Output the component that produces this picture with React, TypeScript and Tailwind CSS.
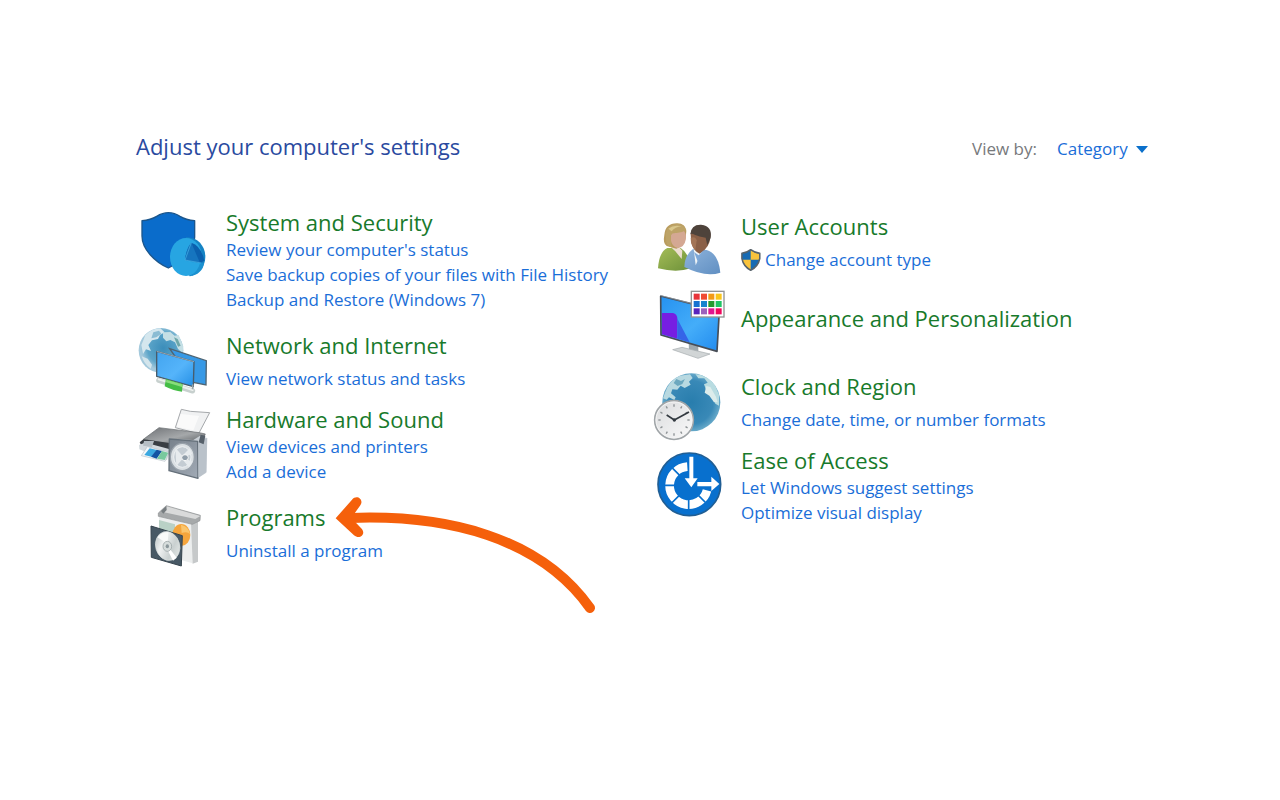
import type { ReactNode } from 'react'

type Category = {
  title: string
  links: string[]
  icon: ReactNode
  spacing: string
  shielded?: boolean
  marked?: boolean
}

function IconFrame({ viewBox, children }: { viewBox: string; children: ReactNode }) {
  return (
    <svg viewBox={viewBox} className="h-[72px] w-20 overflow-visible" aria-hidden="true">
      {children}
    </svg>
  )
}

function SecurityIcon() {
  return (
    <IconFrame viewBox="18 24 240 216">
      <path d="M36 62Q62 60 80 49Q98 38 115 38Q134 38 150 49Q168 60 194 62V112C192 150 158 184 115 204C75 186 36 148 36 108Z" fill="#0a6ccb" stroke="#1c568c" strokeWidth="4" strokeLinejoin="round" />
      <path d="M168 112C202 110 226 138 226 170C226 204 202 224 178 229Z" fill="#1583c4" />
      <ellipse cx="168" cy="171" rx="48" ry="57" fill="#27a5e2" />
      <path d="M168 184L222 190C220 212 202 226 180 229C196 220 206 206 210 190Z" fill="#1b91d0" />
      <path d="M184 128Q214 138 223 182L210 189L165 180Q168 148 184 128Z" fill="#0b60ae" />
      <path d="M184 128L210 189L165 180Q168 148 184 128Z" fill="#1675bf" />
      <path d="M165 180L184 128M165 180L213 189" fill="none" stroke="#48b7e8" strokeWidth="2" />
    </IconFrame>
  )
}

function NetworkIcon() {
  return (
    <IconFrame viewBox="18 18 240 216">
      <defs>
        <radialGradient id="net-globe" cx="55%" cy="45%">
          <stop offset="0" stopColor="#3b8dba" />
          <stop offset="0.7" stopColor="#5ca5c9" />
          <stop offset="1" stopColor="#a4c9dc" />
        </radialGradient>
        <linearGradient id="net-screen" x1="0" y1="0" x2="1" y2="1">
          <stop offset="0" stopColor="#42a4ef" />
          <stop offset="0.55" stopColor="#55b4fa" />
          <stop offset="1" stopColor="#238ee5" />
        </linearGradient>
      </defs>
      <circle cx="93" cy="94" r="67" fill="url(#net-globe)" />
      <path d="M46 48Q66 28 91 28L104 40L90 48L84 60L66 64L55 78L63 96L48 91L39 105L34 78Z" fill="#d5e7ee" />
      <path d="M70 40L87 35L94 44L79 55L64 58Z" fill="#8bbcd3" />
      <path d="M99 40L121 39L134 50L146 48L160 82L158 102L144 90L135 70L121 63L109 67L99 56Z" fill="#c5dfe5" />
      <path d="M132 55L143 60L152 80L144 83Z" fill="#6da7a9" />
      <path d="M35 112L53 119L66 137L62 149Q43 137 35 112Z" fill="#d3e5ec" />
      <path d="M119 89L229 125L228 198L190 190Z" fill="#3799e6" stroke="#4e6473" strokeWidth="4" />
      <path d="M80 97L192 128L190 203L80 172Z" fill="url(#net-screen)" stroke="#485c6b" strokeWidth="4" strokeLinejoin="round" />
      <path d="M80 97L192 128" stroke="#bcc9d0" strokeWidth="2" />
      <path d="M86 184L188 216" stroke="#c7d0ce" strokeWidth="15" strokeLinecap="round" />
      <path d="M86 181L188 213" stroke="#edf1ef" strokeWidth="6" strokeLinecap="round" />
      <path d="M108 180L158 195L156 218Q132 216 104 202Z" fill="#43bd45" />
      <path d="M109 182L156 196L156 204L108 190Z" fill="#89dc7a" />
      <path d="M188 196V211" stroke="#99a5a8" strokeWidth="5" />
    </IconFrame>
  )
}

function HardwareIcon() {
  return (
    <IconFrame viewBox="18 27 240 216">
      <defs>
        <linearGradient id="hw-lid" x1="0" y1="0" x2="1" y2="1">
          <stop offset="0" stopColor="#6e7175" />
          <stop offset="0.55" stopColor="#a5a8aa" />
          <stop offset="1" stopColor="#55595d" />
        </linearGradient>
        <linearGradient id="hw-box" x1="0" y1="0" x2="1" y2="1">
          <stop offset="0" stopColor="#77818c" />
          <stop offset="1" stopColor="#a1aab5" />
        </linearGradient>
      </defs>
      <path d="M154 28L181 34L239 38L206 101L136 83Z" fill="#f0f1f2" stroke="#a5a8ab" strokeWidth="3" />
      <path d="M152 42L207 48L190 91L140 80Z" fill="#fafafa" />
      <path d="M87 83L208 98L226 102L211 130L117 132L40 118Z" fill="url(#hw-lid)" stroke="#62666a" strokeWidth="2" />
      <path d="M40 118L119 129L130 151L116 163L35 139L29 127Z" fill="#393e43" />
      <path d="M27 135L49 127L64 133L120 148L111 181L28 148Z" fill="#d4dade" />
      <path d="M42 123L72 123L66 141L39 137Z" fill="#b6bec4" />
      <path d="M52 140L117 156L105 184L34 167Z" fill="#f6f8fa" stroke="#bac2c8" strokeWidth="2" />
      <path d="M59 145L81 150L64 170L43 165Z" fill="#3ba8e0" />
      <path d="M80 149L96 153L80 176L63 170Z" fill="#1454a3" />
      <path d="M96 153L115 158L104 180L81 176Z" fill="#79c99e" />
      <path d="M121 117L190 120L209 108L232 114L229 218L204 234L117 210Z" fill="#c8ced4" />
      <path d="M118 117L203 124L204 235L117 212Z" fill="url(#hw-box)" stroke="#65707a" strokeWidth="4" strokeLinejoin="round" />
      <path d="M205 123L231 115L229 216L205 233Z" fill="#bac2ca" />
      <path d="M212 104L226 107L221 133L206 127Z" fill="#56606a" />
      <ellipse cx="157" cy="171" rx="36" ry="41" fill="#dbe0e4" stroke="#98a1aa" strokeWidth="4" />
      <ellipse cx="157" cy="171" rx="26" ry="31" fill="#c4ccd3" stroke="#eef1f3" strokeWidth="3" />
      <path d="M136 143L157 167L179 145L187 161L160 173L188 185L177 202L157 178L139 198Z" fill="#e7ebee" />
      <ellipse cx="165" cy="173" rx="10" ry="9" fill="#919eaa" stroke="#f7f8f8" strokeWidth="3" />
    </IconFrame>
  )
}

function ProgramsIcon() {
  return (
    <IconFrame viewBox="-12 9 240 216">
      <defs>
        <linearGradient id="prog-disc" x1="0" y1="0" x2="1" y2="1">
          <stop offset="0" stopColor="#aeb8b9" />
          <stop offset="0.35" stopColor="#eff1f1" />
          <stop offset="0.65" stopColor="#c9d0d0" />
          <stop offset="1" stopColor="#eef1ef" />
        </linearGradient>
      </defs>
      <path d="M57 62L158 86V208L58 180Z" fill="#eceeee" />
      <path d="M153 85L174 80V203L158 209Z" fill="#c6c9ca" />
      <path d="M55 57L79 35L181 64L180 80L157 91L55 67Z" fill="#a6a9aa" stroke="#8f9394" strokeWidth="2" />
      <path d="M80 37L181 66L166 75L65 53Z" fill="#d9dada" />
      <path d="M63 51L79 36L80 48L70 59Z" fill="#777d80" />
      <path d="M57 78L105 91V132L57 113Z" fill="#b9d1c6" />
      <ellipse cx="124" cy="123" rx="27" ry="33" fill="#f5a53c" />
      <path d="M123 92Q146 97 150 121Q143 111 125 117Z" fill="#fac56d" />
      <path d="M33 96L127 125L124 216L34 190Z" fill="#485965" stroke="#35434d" strokeWidth="3" strokeLinejoin="round" />
      <ellipse cx="83" cy="156" rx="36" ry="44" transform="rotate(-16 83 156)" fill="url(#prog-disc)" stroke="#dce1e0" strokeWidth="2" />
      <path d="M52 130Q66 112 85 115L83 149Z" fill="#f9faf9" />
      <path d="M88 163L110 191L99 200L83 168Z" fill="#fff" />
      <ellipse cx="82" cy="157" rx="13" ry="15" fill="#d7dddc" stroke="#8f9a9c" strokeWidth="2" />
      <ellipse cx="82" cy="157" rx="5" ry="6" fill="#8b979b" />
    </IconFrame>
  )
}

function AccountsIcon() {
  return (
    <IconFrame viewBox="18 -13 240 216">
      <defs>
        <linearGradient id="acc-green" x1="0" y1="0" x2="1" y2="1">
          <stop offset="0" stopColor="#a5bd58" />
          <stop offset="1" stopColor="#6d9139" />
        </linearGradient>
        <linearGradient id="acc-blue" x1="0" y1="0" x2="1" y2="1">
          <stop offset="0" stopColor="#8fb4dc" />
          <stop offset="1" stopColor="#608fc2" />
        </linearGradient>
      </defs>
      <path d="M39 174Q42 125 67 113L107 113Q133 129 138 174Q95 188 39 174Z" fill="url(#acc-green)" />
      <path d="M73 106L97 105L112 121L110 146L91 123Z" fill="#edded1" />
      <path d="M65 107Q53 99 58 74Q61 38 97 39Q121 40 124 61L122 84Q117 109 94 115Z" fill="#b99c5e" />
      <path d="M78 69Q98 69 111 55Q126 67 122 89Q118 111 98 113Q80 107 78 91Z" fill="#d4a893" />
      <path d="M63 79Q59 52 84 43Q113 36 124 59Q105 71 84 67L77 76L79 111Q61 107 63 79Z" fill="#bda367" />
      <path d="M70 55Q86 42 110 48Q90 50 80 63Z" fill="#d9c78c" />
      <path d="M118 170Q119 134 144 116L185 119Q220 128 226 187Q181 202 118 170Z" fill="url(#acc-blue)" />
      <path d="M146 115L172 121L152 165Z" fill="#eef3f6" />
      <path d="M137 70Q142 45 167 44Q195 47 196 78Q195 113 164 130Q147 124 139 98Z" fill="#8b6047" />
      <path d="M136 72Q138 42 168 43Q203 47 197 83L187 105L182 82Q162 79 149 73Q140 68 136 72Z" fill="#4e433b" />
      <path d="M137 83Q151 77 155 90L151 120Q137 106 137 83Z" fill="#a37456" />
      <path d="M147 125L161 135L177 119L159 156Z" fill="#7da8d8" />
    </IconFrame>
  )
}

function AppearanceIcon() {
  const swatches = [
    '#e7343a', '#f04a32', '#f29a16', '#f9c51b',
    '#1672d1', '#1584ce', '#249a2e', '#20c465',
    '#5924bd', '#9b62bd', '#e01590', '#ef075d',
  ]
  return (
    <IconFrame viewBox="18 -9 240 216">
      <defs>
        <linearGradient id="app-screen" x1="0" y1="0" x2="1" y2="1">
          <stop offset="0" stopColor="#2591f0" />
          <stop offset="0.55" stopColor="#44adf9" />
          <stop offset="1" stopColor="#218aee" />
        </linearGradient>
      </defs>
      <path d="M131 173L160 181V203L132 199Z" fill="#9fa8ad" />
      <path d="M83 194L111 187L195 207L159 220Z" fill="#d1d5d6" stroke="#a4abae" strokeWidth="2" />
      <path d="M47 33L223 77L216 199L48 150Z" fill="url(#app-screen)" stroke="#484e57" strokeWidth="5" strokeLinejoin="round" />
      <path d="M51 84L84 84Q97 88 97 101V161L51 148Z" fill="#761ee2" />
      <path d="M97 101V161L134 172Z" fill="#3565e8" />
      <path d="M45 31L223 77" stroke="#9aa5ad" strokeWidth="2" />
      <rect x="139" y="19" width="98" height="77" fill="#fff" stroke="#929393" strokeWidth="4" />
      {swatches.map((color, index) => (
        <rect key={color} x={146 + (index % 4) * 22} y={26 + Math.floor(index / 4) * 22} width="18" height="18" fill={color} />
      ))}
    </IconFrame>
  )
}

function ClockIcon() {
  return (
    <IconFrame viewBox="18 6 240 216">
      <defs>
        <radialGradient id="clock-globe" cx="50%" cy="50%">
          <stop offset="0" stopColor="#287dad" />
          <stop offset="0.75" stopColor="#3989b7" />
          <stop offset="1" stopColor="#67a9c9" />
        </radialGradient>
        <linearGradient id="clock-face" x1="0" y1="0" x2="1" y2="1">
          <stop offset="0" stopColor="#dadbdd" />
          <stop offset="1" stopColor="#fafafa" />
        </linearGradient>
      </defs>
      <circle cx="139" cy="115" r="87" fill="url(#clock-globe)" />
      <path d="M60 86Q72 48 105 35L135 31L143 42L132 53L137 62L119 72L107 65L97 77L82 76L78 88L92 100L88 108L72 100L65 107L54 103Z" fill="#b8d9e1" />
      <path d="M94 45L108 51L120 45L112 60L98 66L86 57Z" fill="#6ca8bf" />
      <path d="M151 30Q190 35 211 65L222 92V125L211 119L200 90L183 77L177 61L188 56L178 43L160 43Z" fill="#b9dce1" />
      <path d="M184 66L196 69L213 98L218 115L207 115L193 95L179 86Z" fill="#dceceb" />
      <circle cx="87" cy="168" r="58" fill="url(#clock-face)" stroke="#a0a5a8" strokeWidth="5" />
      <circle cx="87" cy="168" r="54" fill="none" stroke="#f4f4f4" strokeWidth="3" />
      {[0, 30, 60, 90, 120, 150, 180, 210, 240, 270, 300, 330].map((angle) => (
        <path key={angle} d="M87 121V128" transform={`rotate(${angle} 87 168)`} stroke="#8b9093" strokeWidth="4" />
      ))}
      <path d="M65 153L88 168L132 144" fill="none" stroke="#333a40" strokeWidth="5" />
      <circle cx="88" cy="168" r="5" fill="#333a40" />
    </IconFrame>
  )
}

function AccessIcon() {
  return (
    <IconFrame viewBox="18 17 240 216">
      <circle cx="133" cy="120" r="94" fill="#0870ce" stroke="#205e94" strokeWidth="5" />
      <path d="M186 138A57 57 0 1 1 127 67" fill="none" stroke="#fff" strokeWidth="26" />
      <path d="M131 163V198M103 153L77 179M91 123H58M104 93L77 66M158 151L183 176" stroke="#0870ce" strokeWidth="5" />
      <path d="M133 37H145V102H158L139 129L119 102H133Z" fill="#fff" />
      <path d="M157 113H199V97L223 119L199 140V126H157Z" fill="#fff" />
    </IconFrame>
  )
}

function AdminShield() {
  return (
    <svg viewBox="282 112 66 72" className="h-[22px] w-5" aria-hidden="true">
      <path d="M285 126Q302 124 314 114Q327 124 344 126V143Q339 169 314 182Q290 169 285 143Z" fill="#176bb3" />
      <path d="M314 116Q328 126 343 127V147H314ZM286 147H314V180Q291 168 286 147Z" fill="#f9c33c" />
      <path d="M285 126Q302 124 314 114Q327 124 344 126V143Q339 169 314 182Q290 169 285 143Z" fill="none" stroke="#58636b" strokeWidth="5" strokeLinejoin="round" />
    </svg>
  )
}

function PointerArrow() {
  return (
    <svg viewBox="0 0 870 390" className="pointer-events-none absolute -top-2 left-[184px] h-[130px] w-[290px]" aria-hidden="true">
      <path d="M90 87C380 76 660 145 810 357" fill="none" stroke="#f5600b" strokeWidth="30" strokeLinecap="round" />
      <path d="M47 88L96 32C111 14 134 33 120 50L94 87L125 119C139 136 119 153 102 139Z" fill="#f5600b" />
    </svg>
  )
}

const leftColumn: Category[] = [
  {
    title: 'System and Security',
    links: ["Review your computer's status", 'Save backup copies of your files with File History', 'Backup and Restore (Windows 7)'],
    icon: <SecurityIcon />,
    spacing: 'items-start',
  },
  { title: 'Network and Internet', links: ['View network status and tasks'], icon: <NetworkIcon />, spacing: 'mt-[13px] items-center' },
  { title: 'Hardware and Sound', links: ['View devices and printers', 'Add a device'], icon: <HardwareIcon />, spacing: 'mt-2 items-center' },
  { title: 'Programs', links: ['Uninstall a program'], icon: <ProgramsIcon />, spacing: 'mt-[13px] items-center', marked: true },
]

const rightColumn: Category[] = [
  { title: 'User Accounts', links: ['Change account type'], icon: <AccountsIcon />, spacing: 'items-center', shielded: true },
  { title: 'Appearance and Personalization', links: [], icon: <AppearanceIcon />, spacing: 'mt-1 items-center' },
  { title: 'Clock and Region', links: ['Change date, time, or number formats'], icon: <ClockIcon />, spacing: 'mt-3 items-center' },
  { title: 'Ease of Access', links: ['Let Windows suggest settings', 'Optimize visual display'], icon: <AccessIcon />, spacing: 'mt-2 items-center' },
]

function CategoryRow({ category }: { category: Category }) {
  const { title, links, icon, spacing, shielded, marked } = category
  return (
    <li className={`relative grid grid-cols-[90px_1fr] ${spacing}`}>
      {icon}
      <div className={`flex flex-col items-start ${links.length === 1 ? 'gap-1.5' : ''}`}>
        <h2 className="text-[22px] leading-[29px] text-[#187a2b]">
          <a href="#" className="hover:underline">{title}</a>
        </h2>
        {links.map((link) => (
          <a key={link} href="#" className="flex items-center gap-1 text-[17px] leading-[25px] text-[#1a6ed8] hover:underline">
            {shielded && <AdminShield />}
            {link}
          </a>
        ))}
      </div>
      {marked && <PointerArrow />}
    </li>
  )
}

export default function App() {
  return (
    <main className="min-h-screen bg-white font-['Open_Sans','Noto_Sans',sans-serif]">
      <div className="mx-auto max-w-[1024px] pt-[132px] pr-1 pl-2">
        <header className="flex items-start justify-between">
          <h1 className="text-[22px] leading-[29px] text-[#2a4a9f]">Adjust your computer's settings</h1>
          <div className="flex items-center gap-5 text-[17px] leading-[34px]">
            <label htmlFor="view-by" className="text-[#77797c]">View by:</label>
            <div className="flex items-center gap-2">
              <select id="view-by" className="appearance-none bg-transparent text-[#1a6ed8] outline-none">
                <option>Category</option>
              </select>
              <svg viewBox="0 0 12 7" className="h-[7px] w-3" aria-hidden="true">
                <path d="M0 0H12L6 7Z" fill="#0b70cb" />
              </svg>
            </div>
          </div>
        </header>
        <div className="mt-10 grid grid-cols-2 gap-[18px]">
          <ul className="pt-0.5">
            {leftColumn.map((category) => <CategoryRow key={category.title} category={category} />)}
          </ul>
          <ul>
            {rightColumn.map((category) => <CategoryRow key={category.title} category={category} />)}
          </ul>
        </div>
      </div>
    </main>
  )
}
